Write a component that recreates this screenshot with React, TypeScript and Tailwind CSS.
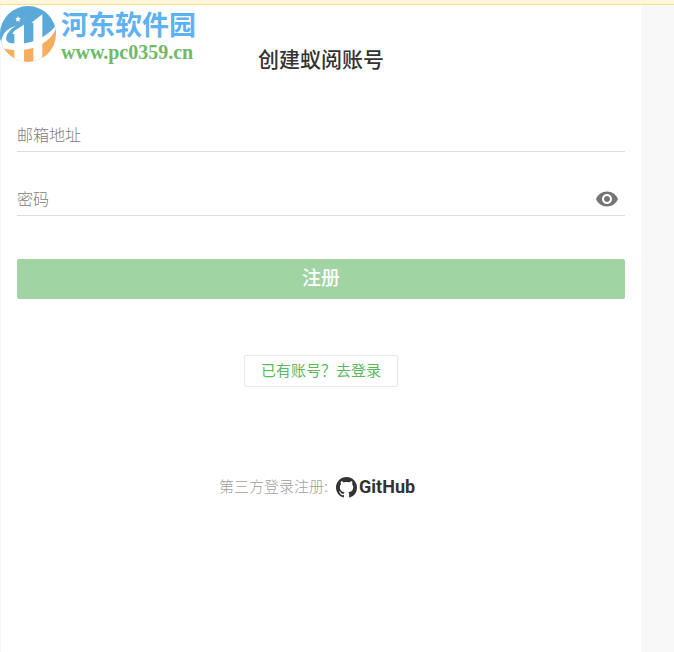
import { useState } from "react";
import type { FormEvent } from "react";
import { MdVisibility } from "react-icons/md";

function SiteLogo() {
  return (
    <svg viewBox="0 12 174 180" className="h-15 w-[58px]" aria-hidden="true">
      <clipPath id="disc">
        <circle cx="84" cy="102" r="84" />
      </clipPath>
      <g clipPath="url(#disc)">
        <path fill="#5aa9d8" d="M0 12h174v78c-28 36-94 60-174 48z" />
        <path fill="#f7ad60" d="M0 142c80 14 144-8 174-60v110H0z" />
        {/* towers */}
        <path fill="#fff" d="M37 102l6-10 29-18v118H43v-90zM94 68l33-25v149h-27V68z" />
        {/* ring around the towers */}
        <path
          fill="#fff"
          d="M48 77C12 86-2 116 6 144c60 16 134 4 164-60v-10c-34 44-88 64-140 55C10 124 16 96 48 77z"
        />
      </g>
      <path fill="#5aa9d8" d="M2 122C-2 104 2 84 14 66l28 9C20 84 5 100 2 122z" />
      <path fill="#fff" d="m54 48 3 6 6 1-5 4 1 7-5-4-6 3 2-6-4-5h6z" />
    </svg>
  );
}

function GitHubMark() {
  return (
    <svg viewBox="0 0 16 16" className="size-[21px]" fill="currentColor" aria-hidden="true">
      <path d="M8 0C3.58 0 0 3.58 0 8c0 3.54 2.29 6.53 5.47 7.59.4.07.55-.17.55-.38 0-.19-.01-.82-.01-1.49-2.01.37-2.53-.49-2.69-.94-.09-.23-.48-.94-.82-1.13-.28-.15-.68-.52-.01-.53.63-.01 1.08.58 1.23.82.72 1.21 1.87.87 2.33.66.07-.52.28-.87.51-1.07-1.78-.2-3.64-.89-3.64-3.95 0-.87.31-1.59.82-2.15-.08-.2-.36-1.02.08-2.12 0 0 .67-.21 2.2.82.64-.18 1.32-.27 2-.27s1.36.09 2 .27c1.53-1.04 2.2-.82 2.2-.82.44 1.1.16 1.92.08 2.12.51.56.82 1.27.82 2.15 0 3.07-1.87 3.75-3.65 3.95.29.25.54.73.54 1.48 0 1.07-.01 1.93-.01 2.2 0 .21.15.46.55.38A8.01 8.01 0 0 0 16 8c0-4.42-3.58-8-8-8z" />
    </svg>
  );
}

const inputClass =
  "h-8 w-full min-w-0 flex-1 bg-transparent pt-0.5 text-base font-light text-[#333] placeholder:text-[#808080] focus:outline-none";

export default function App() {
  const [email, setEmail] = useState("");
  const [password, setPassword] = useState("");
  const [showPassword, setShowPassword] = useState(false);

  const handleSubmit = (e: FormEvent) => {
    e.preventDefault();
  };

  return (
    <div className="relative flex min-h-screen flex-col bg-[#f8f8f8] font-['Liberation_Sans','Noto_Sans_CJK_SC',sans-serif]">
      <div className="h-[5px] border-b border-[#f8e08e] bg-[#fff7da]" />

      {/* Site badge */}
      <div className="absolute top-1 left-0 flex">
        <SiteLogo />
        <div className="pt-1 pl-[3px]">
          <p className="text-[27px] leading-9 font-bold text-[#5fb2f2]">河东软件园</p>
          <p className="font-['Liberation_Serif',serif] text-xl leading-4 font-bold text-[#6fba68]">
            www.pc0359.cn
          </p>
        </div>
      </div>

      <main className="mr-[33px] ml-px flex-1 bg-white px-4 pt-10">
        <h1 className="text-center text-[21px] leading-[30px] font-medium text-[#333]">创建蚁阅账号</h1>

        <form onSubmit={handleSubmit} className="pt-11">
          <div className="flex h-[33px] border-b border-[#ddd]">
            <input
              type="email"
              aria-label="邮箱地址"
              placeholder="邮箱地址"
              value={email}
              onChange={(e) => setEmail(e.target.value)}
              className={inputClass}
            />
          </div>

          <div className="mt-[31px] flex h-[33px] items-center border-b border-[#ddd] pr-1.5">
            <input
              type={showPassword ? "text" : "password"}
              aria-label="密码"
              placeholder="密码"
              value={password}
              onChange={(e) => setPassword(e.target.value)}
              className={inputClass}
            />
            <button
              type="button"
              aria-label="显示密码"
              onClick={() => setShowPassword(!showPassword)}
              className="text-[#757575]"
            >
              <MdVisibility size={24} />
            </button>
          </div>

          <button
            type="submit"
            className="mt-[43px] h-10 w-full rounded-xs bg-[#a0d5a3] text-[19px] font-medium text-white"
          >
            注册
          </button>
        </form>

        <div className="mt-14 flex justify-center">
          <a
            href="#login"
            className="flex h-8 items-center rounded-xs border border-[#e8e8e8] px-4 text-[15px] text-[#5cb860]"
          >
            已有账号？去登录
          </a>
        </div>

        <div className="mt-[84px] flex h-8 items-center justify-center pr-2">
          <span className="text-[15px] font-light text-[#a0a0a0]">第三方登录注册:</span>
          <a
            href="#github"
            className="ml-2 flex items-center gap-0.5 font-[Roboto,sans-serif] text-lg font-bold text-[#333]"
          >
            <GitHubMark />
            GitHub
          </a>
        </div>
      </main>
    </div>
  );
}
